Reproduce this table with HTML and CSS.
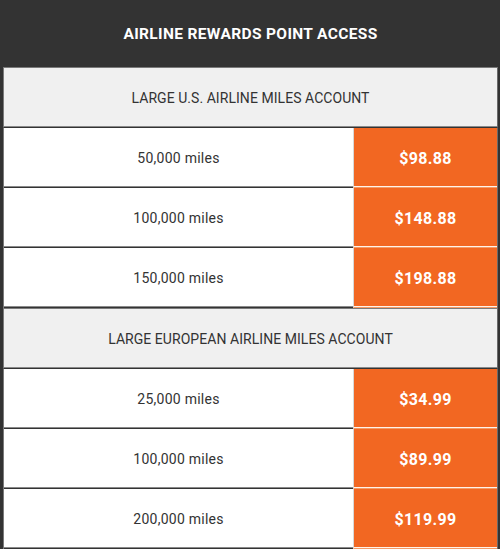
FILE: index.html
```html
<!DOCTYPE html>
<html>
<head>
<meta charset="utf-8">
<link rel="stylesheet" href="styles.css">
</head>
<body>
<div class="board">
  <div class="title">AIRLINE REWARDS POINT ACCESS</div>
  <div class="section">LARGE U.S. AIRLINE MILES ACCOUNT</div>
  <div class="row"><div class="label">50,000 miles</div><div class="price">$98.88</div></div>
  <div class="row"><div class="label">100,000 miles</div><div class="price">$148.88</div></div>
  <div class="row"><div class="label">150,000 miles</div><div class="price">$198.88</div></div>
  <div class="section">LARGE EUROPEAN AIRLINE MILES ACCOUNT</div>
  <div class="row"><div class="label">25,000 miles</div><div class="price">$34.99</div></div>
  <div class="row"><div class="label">100,000 miles</div><div class="price">$89.99</div></div>
  <div class="row"><div class="label">200,000 miles</div><div class="price">$119.99</div></div>
</div>
</body>
</html>
```
FILE: styles.css
```css
html, body {
  margin: 0;
  padding: 0;
  background: #333333;
}
body {
  width: 500px;
  height: 549px;
  overflow: hidden;
  font-family: Roboto, "Liberation Sans", sans-serif;
}
.board {
  display: flex;
  flex-direction: column;
  padding: 0 2px 0 3px;
}
.title {
  height: 67px;
  display: flex;
  align-items: center;
  justify-content: center;
  color: #ffffff;
  font-weight: 700;
  font-size: 15.5px;
  letter-spacing: 0.35px;
}
.section {
  height: 59px;
  display: flex;
  align-items: center;
  justify-content: center;
  background: #f0f0f0;
  color: #333333;
  font-size: 14px;
  letter-spacing: 0.05px;
  border-top: 1px solid #7a7a7a;
  border-left: 1px solid #7a7a7a;
  border-right: 1px solid #6a6a6a;
  border-bottom: 1px solid #333333;
  box-shadow: inset 0 -1px 0 #8a8a8a;
}
.row {
  display: flex;
  height: 60px;
  border-left: 1px solid #7a7a7a;
  border-right: 1px solid #6a6a6a;
}
.label {
  flex: 1;
  display: flex;
  align-items: center;
  justify-content: center;
  background: #ffffff;
  color: #333333;
  font-size: 14px;
  letter-spacing: 0.25px;
  padding-top: 1px;
  border-bottom: 1px solid #333333;
  box-shadow: inset 0 -1px 0 #8a8a8a;
}
.price {
  width: 143px;
  display: flex;
  align-items: center;
  justify-content: center;
  background: #f26722;
  color: #ffffff;
  font-weight: 700;
  font-size: 16px;
  letter-spacing: 0.3px;
  padding-top: 1px;
  border-left: 1px solid #d8d8d8;
  border-bottom: 1px solid #f59a66;
  box-shadow: inset 0 -1px 0 #fff3ea;
}
```
